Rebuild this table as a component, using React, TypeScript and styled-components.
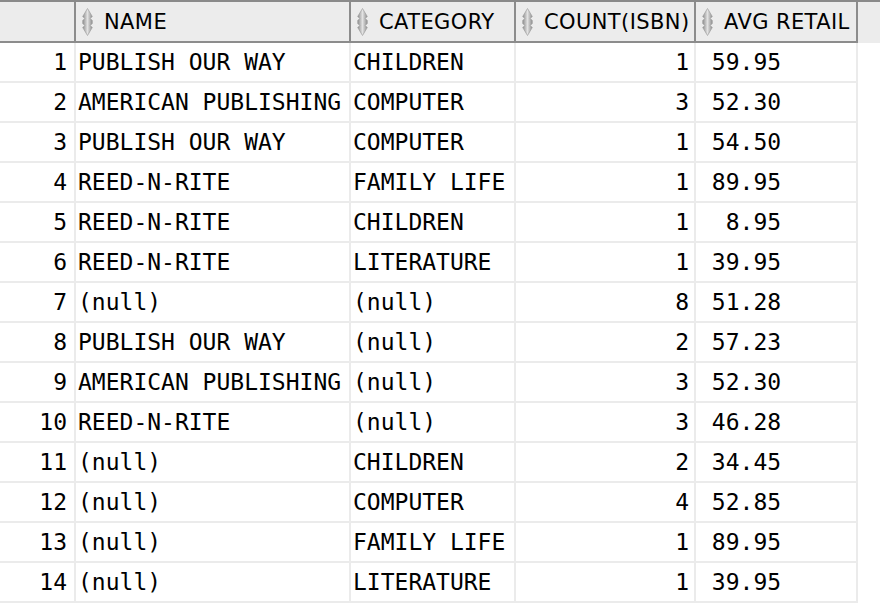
import React from "react";
import styled, { createGlobalStyle } from "styled-components";

const Global = createGlobalStyle`
  html, body { margin: 0; padding: 0; background: #ffffff; overflow: hidden; }
  #root { width: 880px; height: 608px; }
`;

const COLS = "76px 275px 165px 180px 162px 1fr";

const Grid = styled.div`
  width: 880px;
  display: flex;
  flex-direction: column;
`;

const HeaderRow = styled.div`
  display: grid;
  grid-template-columns: ${COLS};
  height: 41px;
  border-top: 2px solid #8a8a8a;
  background: #ececec;
`;

const HeadCell = styled.div<{ $filler?: boolean }>`
  display: flex;
  align-items: center;
  gap: 11px;
  padding-left: 6px;
  box-sizing: border-box;
  border-right: ${(p) => (p.$filler ? "none" : "2px solid #8c8c8c")};
  border-bottom: ${(p) => (p.$filler ? "none" : "2px solid #8c8c8c")};
  font-family: "DejaVu Sans", "Liberation Sans", sans-serif;
  font-size: 21px;
  letter-spacing: 0.4px;
  color: #000;
  white-space: nowrap;
  overflow: hidden;
`;

const Row = styled.div`
  display: grid;
  grid-template-columns: ${COLS};
  height: 40px;
`;

const Cell = styled.div<{ $align?: "left" | "right"; $filler?: boolean }>`
  box-sizing: border-box;
  border-right: ${(p) => (p.$filler ? "none" : "2px solid #ebebeb")};
  border-bottom: ${(p) => (p.$filler ? "none" : "2px solid #ebebeb")};
  font-family: "DejaVu Sans Mono", "Liberation Mono", monospace;
  font-size: 23px;
  line-height: 38px;
  color: #000;
  white-space: pre;
  text-align: ${(p) => (p.$align === "right" ? "right" : "left")};
  padding-left: ${(p) => (p.$align === "right" ? "0" : "2px")};
  padding-right: ${(p) => (p.$align === "right" ? "5px" : "0")};
  overflow: hidden;
`;

const NumCell = styled(Cell)`
  padding-right: 7px;
`;

const SortIcon = () => (
  <svg width="11" height="28" viewBox="0 0 11 28" style={{ flex: "none" }}>
    <defs>
      <linearGradient id="sg" x1="0" x2="1" y1="0" y2="0">
        <stop offset="0" stopColor="#8e8e8e" />
        <stop offset="0.5" stopColor="#e2e2e2" />
        <stop offset="1" stopColor="#8e8e8e" />
      </linearGradient>
    </defs>
    <path
      d="M5.5 0.5 L10.3 8.5 L8.3 10.5 L10.3 12.5 L10.3 15.5 L8.3 17.5 L10.3 19.5 L5.5 27.5 L0.7 19.5 L2.7 17.5 L0.7 15.5 L0.7 12.5 L2.7 10.5 L0.7 8.5 Z"
      fill="url(#sg)"
      stroke="#a0a0a0"
      strokeWidth="0.7"
    />
  </svg>
);

type R = [string, string, string, string];
const rows: R[] = [
  ["PUBLISH OUR WAY", "CHILDREN", "1", " 59.95"],
  ["AMERICAN PUBLISHING", "COMPUTER", "3", " 52.30"],
  ["PUBLISH OUR WAY", "COMPUTER", "1", " 54.50"],
  ["REED-N-RITE", "FAMILY LIFE", "1", " 89.95"],
  ["REED-N-RITE", "CHILDREN", "1", "  8.95"],
  ["REED-N-RITE", "LITERATURE", "1", " 39.95"],
  ["(null)", "(null)", "8", " 51.28"],
  ["PUBLISH OUR WAY", "(null)", "2", " 57.23"],
  ["AMERICAN PUBLISHING", "(null)", "3", " 52.30"],
  ["REED-N-RITE", "(null)", "3", " 46.28"],
  ["(null)", "CHILDREN", "2", " 34.45"],
  ["(null)", "COMPUTER", "4", " 52.85"],
  ["(null)", "FAMILY LIFE", "1", " 89.95"],
  ["(null)", "LITERATURE", "1", " 39.95"],
];

const headers = ["NAME", "CATEGORY", "COUNT(ISBN)", "AVG RETAIL"];

export default function App() {
  return (
    <>
      <Global />
      <Grid>
        <HeaderRow>
          <HeadCell />
          {headers.map((h) => (
            <HeadCell key={h}>
              <SortIcon />
              <span>{h}</span>
            </HeadCell>
          ))}
          <HeadCell $filler />
        </HeaderRow>
        {rows.map((r, i) => (
          <Row key={i}>
            <NumCell $align="right">{i + 1}</NumCell>
            <Cell>{r[0]}</Cell>
            <Cell>{r[1]}</Cell>
            <Cell $align="right">{r[2]}</Cell>
            <Cell>{r[3]}</Cell>
            <Cell $filler />
          </Row>
        ))}
      </Grid>
    </>
  );
}
